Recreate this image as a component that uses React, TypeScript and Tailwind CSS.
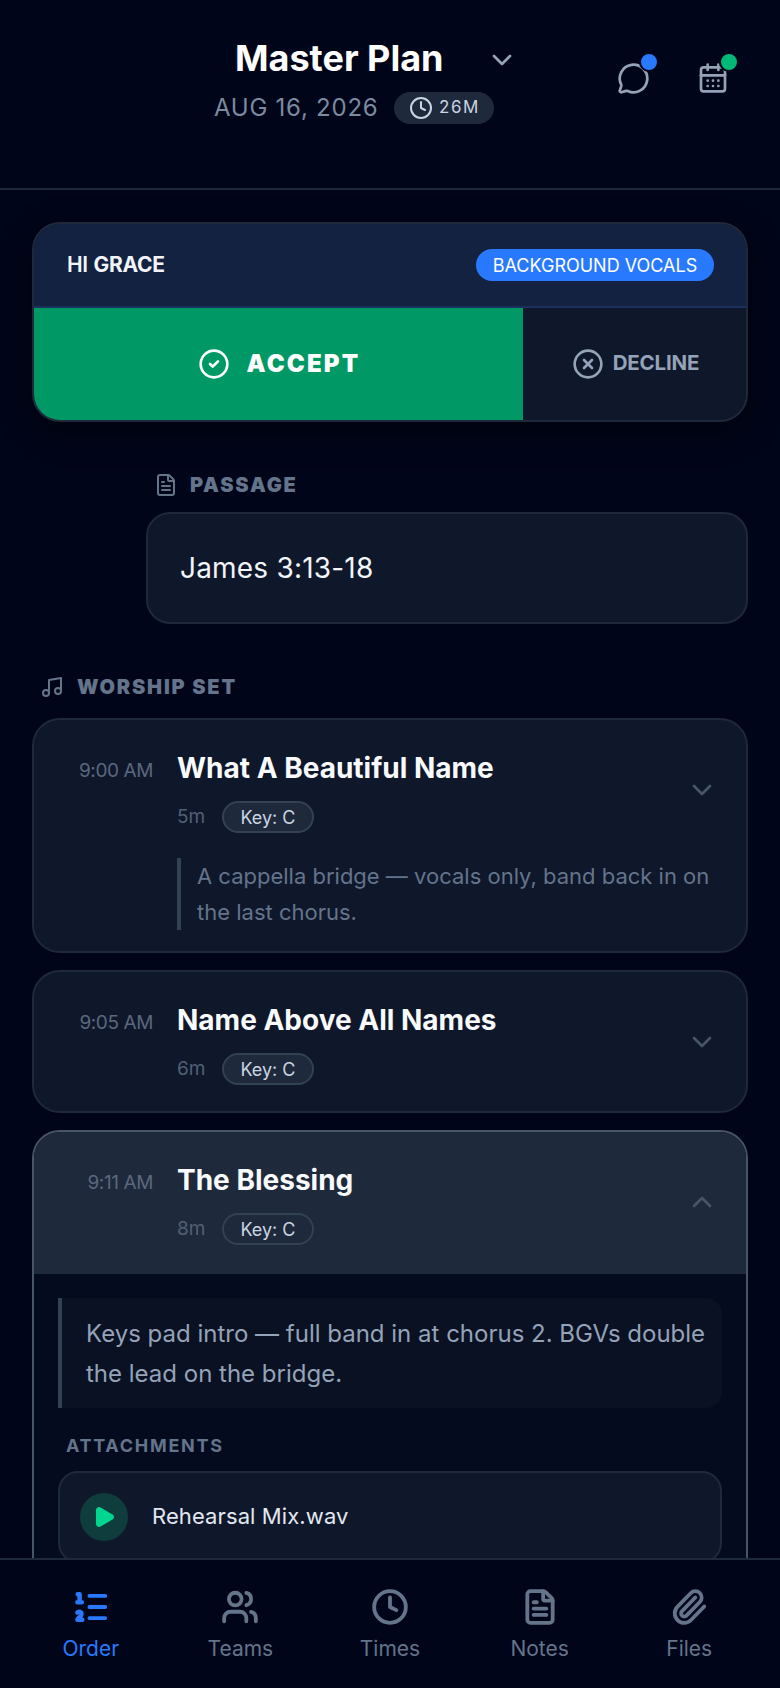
import React from "react";
import {
  CalendarDays,
  ChevronDown,
  ChevronUp,
  CircleCheck,
  CircleX,
  Clock,
  FileText,
  MessageCircle,
  Music,
  Paperclip,
  Play,
  Users,
} from "lucide-react";

// lucide's list-ordered, with the heavier numerals the design uses
function OrderIcon({ size }: { size: number; strokeWidth?: number }) {
  return (
    <svg width={size} height={size} viewBox="0 0 24 24" fill="none" stroke="currentColor" strokeLinecap="round" strokeLinejoin="round">
      <path d="M11 5h10M11 12h10M11 19h10" strokeWidth={2.4} />
      <path d="M3.6 4h1.2v5M3.4 9h2.8M6.5 20H3.4c0-1 2.6-1.9 2.6-3.5a1.5 1.5 0 0 0-2.6-1.02" strokeWidth={2.8} />
    </svg>
  );
}

function KeyPill({ active }: { active?: boolean }) {
  return (
    <span
      className={
        active
          ? "h-8 w-[92px] flex items-center justify-center rounded-full border-2 border-[#334155] text-[18px] text-[#cbd5e1]"
          : "h-8 w-[92px] flex items-center justify-center rounded-full border-2 border-[#334155] bg-[#1e293b] text-[18px] text-[#cbd5e1]"
      }
    >
      Key: C
    </span>
  );
}

function SongHead({
  time,
  title,
  mins,
  active,
}: {
  time: string;
  title: string;
  mins: string;
  active?: boolean;
}) {
  return (
    <div className="flex items-start">
      <div className="w-[119px] pt-[37px] text-right text-[19px] leading-[28px] tracking-[-0.4px] text-[#5b687d]">
        {time}
      </div>
      <div className="ml-6 flex-1">
        <div className="pt-[29px] text-[28px] leading-[38px] font-bold text-[#f8fafc]">
          {title}
        </div>
        <div className="mt-[14px] flex items-center gap-[17px]">
          <span className="w-7 text-[19px] text-[#526075]">{mins}</span>
          <KeyPill active={active} />
        </div>
      </div>
      <div className="pt-[54px] pr-[28px] text-[#475569]">
        {active ? <ChevronUp size={32} /> : <ChevronDown size={32} />}
      </div>
    </div>
  );
}

const tabs = [
  { label: "Order", icon: OrderIcon, on: true },
  { label: "Teams", icon: Users },
  { label: "Times", icon: Clock },
  { label: "Notes", icon: FileText },
  { label: "Files", icon: Paperclip },
];

export default function App() {
  return (
    <div className="h-[1688px] w-[780px] overflow-hidden flex flex-col bg-[#000519] font-['Inter',sans-serif]">
      {/* Header */}
      <header className="h-[190px] shrink-0 border-b-2 border-[#1e293b] flex items-start">
        <div className="ml-[214px] w-[402px] pt-[34px]">
          <div className="flex items-center pl-[21px]">
            <h1 className="text-[36px] leading-[48px] font-bold text-white">Master Plan</h1>
            <ChevronDown size={32} className="ml-[43px] mt-[4px] text-[#94a3b8]" />
          </div>
          <div className="mt-[10px] flex items-center">
            <span className="text-[24px] leading-8 tracking-[0.75px] text-[#7c8aa0]">AUG 16, 2026</span>
            <span className="ml-[16px] h-8 w-[100px] flex items-center justify-center gap-[6px] rounded-full bg-[#1e293b] text-[17px] tracking-[1.5px] text-[#cbd5e1]">
              <Clock size={24} />
              26M
            </span>
          </div>
        </div>
        <div className="pt-[62px] pl-[1px] flex items-start gap-[47px] text-[#94a3b8]">
          <div className="relative">
            <MessageCircle size={33} />
            <span className="absolute -top-[10px] left-[22px] h-5 w-5 rounded-full border-2 border-[#000519] bg-[#2979ff]" />
          </div>
          <div className="relative">
            <CalendarDays size={32} />
            <span className="absolute -top-[10px] left-[22px] h-5 w-5 rounded-full border-2 border-[#000519] bg-[#00b976]" />
          </div>
        </div>
      </header>

      <main className="flex-1 overflow-hidden px-8 pt-8">
        {/* Invite card */}
        <section className="h-[200px] rounded-[28px] border-2 border-[#1e293b] overflow-hidden bg-[#0f172a] shadow-[0_10px_30px_rgba(0,0,0,0.5)]">
          <div className="h-[84px] flex items-center justify-between pl-[33px] pr-[32px] bg-[#142241] border-b-2 border-[#1a3160]">
            <span className="text-[21px] tracking-[-0.3px] text-[#f1f5f9]">
              <span className="font-semibold">HI</span> <span className="font-bold">GRACE</span>
            </span>
            <span className="h-8 w-[238px] flex items-center justify-center rounded-full bg-[#2979ff] text-[18px] text-white">
              BACKGROUND VOCALS
            </span>
          </div>
          <div className="flex h-[114px]">
            <div className="w-[489px] pb-[3px] pl-[1px] flex items-center justify-center gap-[17px] bg-[#009965] text-white">
              <CircleCheck size={32} />
              <span className="text-[24px] font-black tracking-[2.2px]">ACCEPT</span>
            </div>
            <div className="flex-1 pb-[3px] pl-[2px] flex items-center justify-center gap-[9px] text-[#94a3b8]">
              <CircleX size={32} />
              <span className="text-[20.5px] font-bold tracking-[-0.2px]">DECLINE</span>
            </div>
          </div>
        </section>

        {/* Passage */}
        <div className="mt-[49px] ml-[122px] flex items-center gap-[12px] text-[#64748b]">
          <FileText size={24} />
          <span className="text-[20px] leading-7 font-black tracking-[1.8px]">PASSAGE</span>
        </div>
        <div className="mt-[13px] ml-[114px] h-[112px] rounded-[24px] border-2 border-[#1e293b] bg-[#0f172a] pl-[32px] flex items-center text-[28px] tracking-[0.2px] text-[#f1f5f9]">
          James 3:13-18
        </div>

        {/* Worship set */}
        <div className="mt-[49px] ml-[8px] flex items-center gap-[13px] text-[#64748b]">
          <Music size={24} />
          <span className="text-[20px] leading-7 font-black tracking-[1.8px]">WORSHIP SET</span>
        </div>

        <div className="mt-[17px] flex flex-col gap-[17px]">
          <article className="h-[235px] rounded-[28px] border-2 border-[#1e293b] bg-[#0f172a]">
            <SongHead time="9:00 AM" title="What A Beautiful Name" mins="5m" />
            <p className="mt-[25px] ml-[143px] mr-[30px] border-l-4 border-[#334155] pl-4 text-[22px] leading-9 text-[#64748b]">
              A cappella bridge — vocals only, band back in on the last chorus.
            </p>
          </article>

          <article className="h-[143px] rounded-[28px] border-2 border-[#1e293b] bg-[#0f172a]">
            <SongHead time="9:05 AM" title="Name Above All Names" mins="6m" />
          </article>

          <article className="rounded-t-[28px] border-2 border-[#475569] bg-[#050b1e] overflow-hidden">
            <div className="h-[142px] bg-[#1e293b]">
              <SongHead time="9:11 AM" title="The Blessing" mins="8m" active />
            </div>
            <div className="px-6 pt-6">
              <p className="h-[110px] rounded-r-2xl border-l-4 border-[#334155] bg-[#0a1122] pl-6 pr-2 pt-[16px] text-[24px] leading-10 text-[#94a3b8]">
                Keys pad intro — full band in at chorus 2. BGVs double the lead on the bridge.
              </p>
              <div className="mt-[26px] pl-2 text-[18px] leading-6 font-bold tracking-[1.7px] text-[#64748b]">
                ATTACHMENTS
              </div>
              <div className="mt-[13px] h-[92px] rounded-[20px] border-2 border-[#1e293b] bg-[#0f172a] flex items-center pl-[20px] gap-6">
                <span className="h-12 w-12 rounded-full bg-[#0f3d3e] flex items-center justify-center">
                  <Play size={24} fill="#00d68f" className="text-[#00d68f]" />
                </span>
                <span className="text-[22px] tracking-[0.1px] text-[#e2e8f0] -mt-[2px]">Rehearsal Mix.wav</span>
              </div>
            </div>
          </article>
        </div>
      </main>

      {/* Tab bar */}
      <nav className="h-[130px] shrink-0 border-t-2 border-[#1e293b] bg-[#000519] px-4 grid grid-cols-5">
        {tabs.map((t) => {
          const Icon = t.icon;
          return (
            <div
              key={t.label}
              className={
                t.on
                  ? "flex flex-col items-center pt-[28px] text-[#2979ff]"
                  : "flex flex-col items-center pt-[28px] text-[#64748b]"
              }
            >
              <Icon size={38} strokeWidth={2.4} />
              <span className="mt-[9px] text-[21px] leading-7">{t.label}</span>
            </div>
          );
        })}
      </nav>
    </div>
  );
}
